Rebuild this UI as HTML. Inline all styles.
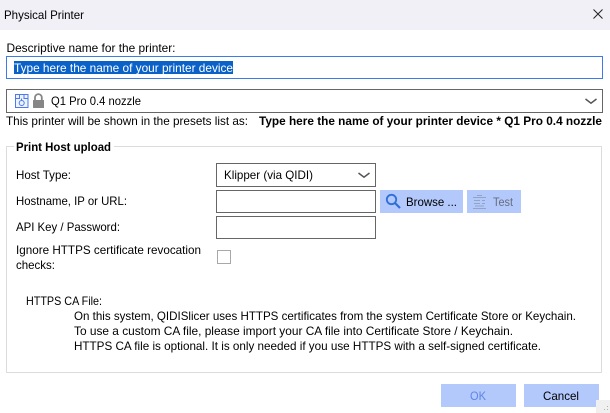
<!DOCTYPE html>
<html><head><meta charset="utf-8"><style>
html,body{margin:0;padding:0;background:#fff;width:610px;height:413px;overflow:hidden}
svg{display:block}
text{font-family:"Liberation Sans",sans-serif;font-size:12px;fill:#000}
</style></head><body>
<svg width="610" height="413" viewBox="0 0 610 413" xmlns="http://www.w3.org/2000/svg">
<rect width="610" height="413" fill="#fff"/>
<rect width="610" height="30" fill="#f0f0f6"/>
<text x="4" y="19" textLength="80" lengthAdjust="spacingAndGlyphs">Physical Printer</text>
<path d="M593.5 9.5L602.500 18.500M602.500 9.500L593.500 18.500" stroke="#222" stroke-width="1" fill="none"/>

<text x="6.500" y="52" textLength="169" lengthAdjust="spacingAndGlyphs">Descriptive name for the printer:</text>
<rect x="6.500" y="56.500" width="596" height="22" fill="#fff" stroke="#3f7be8"/>
<rect x="14" y="61" width="219" height="13" fill="#0a62c9"/>
<text x="14" y="72" textLength="219" lengthAdjust="spacingAndGlyphs" style="fill:#fff">Type here the name of your printer device</text>

<rect x="6.500" y="89.500" width="596" height="23" fill="#fff" stroke="#666"/>
<g fill="none" stroke="#4a7be8">
<rect x="15.500" y="94.500" width="12.500" height="13" fill="#eef3ff"/>
<path d="M15.500 98.500H19.500V94.500M28 98.500H24V94.500M21.500 98.500V100"/>
<circle cx="21.700" cy="103" r="2.500"/>
</g>
<path d="M35 100V97.500a3.400 3.400 0 0 1 6.800 0V100" fill="none" stroke="#868686" stroke-width="1.800"/>
<rect x="33" y="100" width="11" height="8" rx="0.500" fill="#868686"/>
<text x="51" y="105" textLength="90" lengthAdjust="spacingAndGlyphs">Q1 Pro 0.4 nozzle</text>
<path d="M585.500 99L591 103.200L596.500 99" fill="none" stroke="#555" stroke-width="1.500"/>

<text x="6" y="125" textLength="242" lengthAdjust="spacingAndGlyphs">This printer will be shown in the presets list as:</text>
<text x="259" y="125" textLength="343" lengthAdjust="spacingAndGlyphs" style="font-weight:700">Type here the name of your printer device * Q1 Pro 0.4 nozzle</text>

<rect x="6.500" y="146.500" width="595" height="226" fill="none" stroke="#dcdcdc"/>
<rect x="14" y="140" width="100" height="12" fill="#fff"/>
<text x="16" y="151" textLength="95" lengthAdjust="spacingAndGlyphs" style="font-weight:700">Print Host upload</text>

<text x="16" y="179" textLength="55" lengthAdjust="spacingAndGlyphs">Host Type:</text>
<rect x="216.500" y="163.500" width="159" height="23" fill="#fff" stroke="#666"/>
<text x="224" y="179" textLength="89" lengthAdjust="spacingAndGlyphs">Klipper (via QIDI)</text>
<path d="M358.500 173L364 177.200L369.500 173" fill="none" stroke="#555" stroke-width="1.500"/>

<text x="16" y="205" textLength="111" lengthAdjust="spacingAndGlyphs">Hostname, IP or URL:</text>
<rect x="216.500" y="190.500" width="159" height="22" fill="#fff" stroke="#666"/>
<text x="16" y="231" textLength="104" lengthAdjust="spacingAndGlyphs">API Key / Password:</text>
<rect x="216.500" y="216.500" width="159" height="22" fill="#fff" stroke="#666"/>

<text x="16" y="254" textLength="185" lengthAdjust="spacingAndGlyphs">Ignore HTTPS certificate revocation</text>
<text x="16" y="269" textLength="39" lengthAdjust="spacingAndGlyphs">checks:</text>
<rect x="217.500" y="250.500" width="13" height="13" fill="#fff" stroke="#a8a8a8"/>

<rect x="380" y="190" width="83" height="23" fill="#b3c8fb"/>
<circle cx="391.500" cy="199.500" r="4.700" fill="none" stroke="#2f6fd6" stroke-width="1.800"/>
<path d="M395 203L400 208" stroke="#2f6fd6" stroke-width="2.200" fill="none"/>
<text x="406" y="206" textLength="51" lengthAdjust="spacingAndGlyphs">Browse ...</text>

<rect x="467" y="190" width="54" height="23" fill="#b3c8fb"/>
<g stroke="#93a3c6" fill="none" stroke-width="1">
<path d="M473 197.500H486M477 195.500H482M474 200.500H480M482 200.500H485M474 203.500H480M482 203.500H485M473 208.500H486"/>
<path d="M475 206H484"/>
</g>
<text x="493" y="206" textLength="20" lengthAdjust="spacingAndGlyphs" style="fill:#666d7e">Test</text>

<text x="26" y="305" textLength="76" lengthAdjust="spacingAndGlyphs">HTTPS CA File:</text>
<text x="74" y="320" textLength="502" lengthAdjust="spacingAndGlyphs">On this system, QIDISlicer uses HTTPS certificates from the system Certificate Store or Keychain.</text>
<text x="74" y="335" textLength="439" lengthAdjust="spacingAndGlyphs">To use a custom CA file, please import your CA file into Certificate Store / Keychain.</text>
<text x="74" y="350" textLength="467" lengthAdjust="spacingAndGlyphs">HTTPS CA file is optional. It is only needed if you use HTTPS with a self-signed certificate.</text>

<rect x="441" y="384" width="75" height="23" fill="#b3c8fb"/>
<text x="470" y="400" textLength="16" lengthAdjust="spacingAndGlyphs" style="fill:#5f86e6">OK</text>
<rect x="524" y="384" width="75" height="23" fill="#b3c8fb"/>
<text x="543" y="400" textLength="36" lengthAdjust="spacingAndGlyphs">Cancel</text>

<rect x="596" y="400" width="14" height="13" fill="#f0f0f0"/>
<g fill="#b0b0b0"><rect x="607" y="406" width="1" height="1"/><rect x="607" y="409" width="1" height="1"/><rect x="604" y="409" width="1" height="1"/></g>
</svg>
</body></html>
